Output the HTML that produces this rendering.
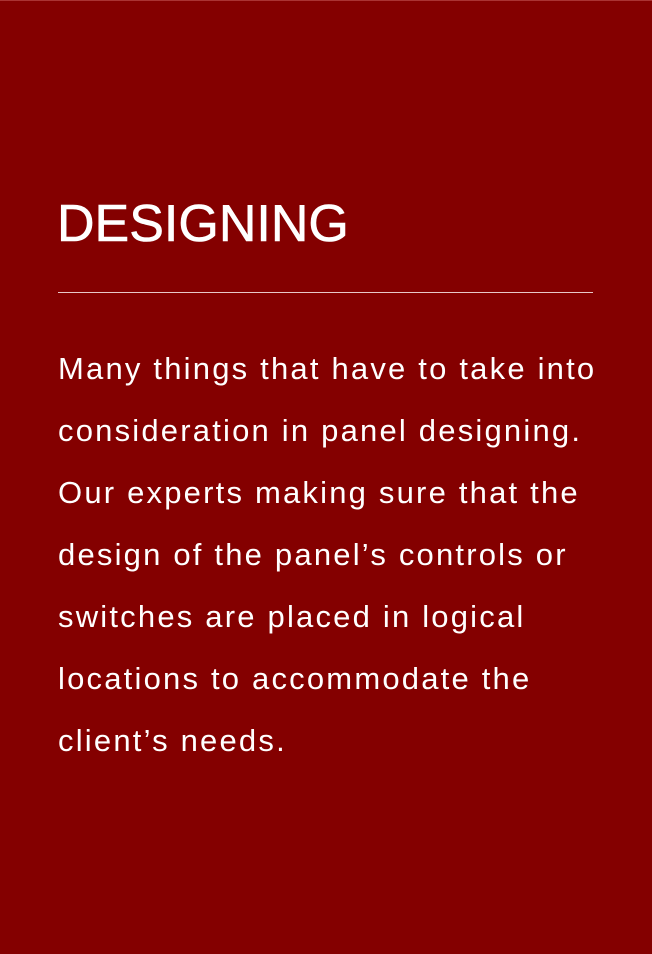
<!DOCTYPE html>
<html><head><meta charset="utf-8"><style>
html,body{margin:0;padding:0}
body{width:652px;height:954px;background:#840000;border-top:1px solid #a33;box-sizing:border-box;font-family:"Liberation Sans",sans-serif;color:#fff;position:relative;overflow:hidden}
h1{position:absolute;left:57px;top:191px;margin:0;font-size:52px;font-weight:normal;line-height:64px;-webkit-text-stroke:0.6px #fff}
.hr{position:absolute;left:58px;top:291px;width:535px;height:1px;background:#e8c8c8}
p{position:absolute;left:58px;top:337px;margin:0;font-size:31px;line-height:62px;white-space:nowrap;letter-spacing:2.2px}
</style></head><body>
<h1>DESIGNING</h1>
<div class="hr"></div>
<p>Many things that have to take into<br>consideration in panel designing.<br>Our experts making sure that the<br>design of the panel’s controls or<br>switches are placed in logical<br>locations to accommodate the<br>client’s needs.</p>
</body></html>
